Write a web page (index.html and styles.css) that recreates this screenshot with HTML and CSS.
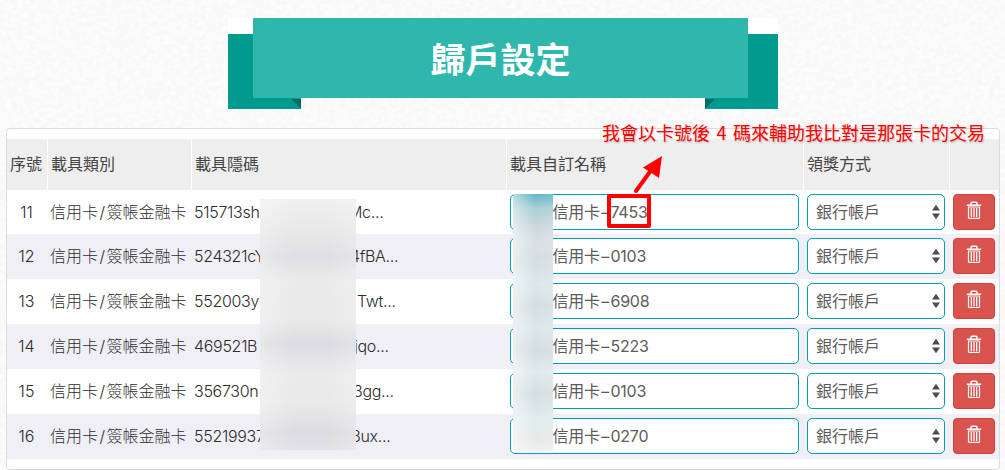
FILE: index.html
```
<!DOCTYPE html>
<html lang="zh-Hant">
<head>
<meta charset="utf-8">
<title>歸戶設定</title>
<link rel="stylesheet" href="styles.css">
</head>
<body>
<svg class="paper" width="1005" height="470" aria-hidden="true">
  <filter id="grain" x="0" y="0" width="100%" height="100%" color-interpolation-filters="sRGB">
    <feTurbulence type="fractalNoise" baseFrequency="0.17 0.22" numOctaves="3" seed="4"/>
    <feColorMatrix values="0.045 0 0 0 0.957  0.045 0 0 0 0.957  0.045 0 0 0 0.957  0 0 0 0 1"/>
  </filter>
  <rect width="1005" height="470" filter="url(#grain)"/>
</svg>
<svg width="0" height="0" class="defs" aria-hidden="true">
  <symbol id="trash" viewBox="0 0 16 19">
    <path d="M.8 4.200h14.400M5 4V2.200Q5 1.300 6 1.300h4Q11 1.300 11 2.200V4" fill="none" stroke="#fff" stroke-width="1.5"/>
    <path d="M2.500 6v10.500q0 1 1 1h9q1 0 1-1V6z" fill="none" stroke="#fff" stroke-width="1.2"/>
    <path d="M5.300 7v9.500M8 7v9.500M10.700 7v9.500" stroke="#fff" stroke-width="1.25"/>
  </symbol>
  <symbol id="sort" viewBox="0 0 8 16">
    <path d="M0 6.500L4 .8l4 5.700zM0 9.500l4 5.700 4-5.700z" fill="#4c4c4c"/>
  </symbol>
</svg>

<header class="ribbon">
  <span class="tail tail-left"></span>
  <span class="tail tail-right"></span>
  <h1 class="title">歸戶設定</h1>
</header>

<main class="panel">
  <div class="row head">
    <div>序號</div><div>載具類別</div><div>載具隱碼</div><div>載具自訂名稱</div><div>領獎方式</div><div></div>
  </div>
  <div class="row r11">
    <div class="num">11</div><div class="kind">信用卡<i>/</i>簽帳金融卡</div>
    <div class="code"><span class="start">515713sh</span><span>Mc...</span></div>
    <div class="name"><div class="field">信用卡<i>–</i>7453</div></div>
    <div class="pay"><div class="select">銀行帳戶<svg><use href="#sort"/></svg></div></div>
    <div class="act"><button class="delete"><svg><use href="#trash"/></svg></button></div>
  </div>
  <div class="row r12">
    <div class="num">12</div><div class="kind">信用卡<i>/</i>簽帳金融卡</div>
    <div class="code"><span class="start">524321cY</span><span>4fBA...</span></div>
    <div class="name"><div class="field">信用卡<i>–</i>0103</div></div>
    <div class="pay"><div class="select">銀行帳戶<svg><use href="#sort"/></svg></div></div>
    <div class="act"><button class="delete"><svg><use href="#trash"/></svg></button></div>
  </div>
  <div class="row r13">
    <div class="num">13</div><div class="kind">信用卡<i>/</i>簽帳金融卡</div>
    <div class="code"><span class="start">552003y</span><span>Twt...</span></div>
    <div class="name"><div class="field">信用卡<i>–</i>6908</div></div>
    <div class="pay"><div class="select">銀行帳戶<svg><use href="#sort"/></svg></div></div>
    <div class="act"><button class="delete"><svg><use href="#trash"/></svg></button></div>
  </div>
  <div class="row r14">
    <div class="num">14</div><div class="kind">信用卡<i>/</i>簽帳金融卡</div>
    <div class="code"><span class="start">469521B</span><span>jqo...</span></div>
    <div class="name"><div class="field">信用卡<i>–</i>5223</div></div>
    <div class="pay"><div class="select">銀行帳戶<svg><use href="#sort"/></svg></div></div>
    <div class="act"><button class="delete"><svg><use href="#trash"/></svg></button></div>
  </div>
  <div class="row r15">
    <div class="num">15</div><div class="kind">信用卡<i>/</i>簽帳金融卡</div>
    <div class="code"><span class="start">356730n</span><span>3gg...</span></div>
    <div class="name"><div class="field">信用卡<i>–</i>0103</div></div>
    <div class="pay"><div class="select">銀行帳戶<svg><use href="#sort"/></svg></div></div>
    <div class="act"><button class="delete"><svg><use href="#trash"/></svg></button></div>
  </div>
  <div class="row r16">
    <div class="num">16</div><div class="kind">信用卡<i>/</i>簽帳金融卡</div>
    <div class="code"><span class="start">55219937</span><span>8ux...</span></div>
    <div class="name"><div class="field">信用卡<i>–</i>0270</div></div>
    <div class="pay"><div class="select">銀行帳戶<svg><use href="#sort"/></svg></div></div>
    <div class="act"><button class="delete"><svg><use href="#trash"/></svg></button></div>
  </div>
</main>

<div class="mask mask-code"></div>
<div class="mask mask-name"></div>
<div class="highlight"></div>
<svg class="arrow" width="40" height="50" viewBox="0 0 40 50">
  <path d="M6 41L22 19" stroke="#f00" stroke-width="4" stroke-linecap="round"/>
  <path d="M32 6L13 17.500 29 28z" fill="#f00"/>
</svg>
<div class="note">我會以卡號後 4 碼來輔助我比對是那張卡的交易</div>
</body>
</html>
```

FILE: styles.css
```
* { box-sizing: border-box; }
body {
  margin: 0;
  width: 1005px;
  height: 470px;
  overflow: hidden;
  position: relative;
  background: #fafafa;
  color: #2c2c2c;
  font: 300 16px/24px Inter, "Noto Sans CJK TC", sans-serif;
}
.paper { position: absolute; left: 0; top: 0; z-index: -2; }
.defs { position: absolute; }

.ribbon {
  position: relative;
  width: 550px;
  height: 110px;
  margin-left: 228px;
  padding: 18px 30px 0 25px;
}
.title {
  position: relative;
  margin: 0;
  height: 80px;
  background: #2fb6ad;
  color: #fff;
  font: 700 35px/80px "Noto Sans CJK TC", sans-serif;
  text-align: center;
}
.tail {
  position: absolute;
  top: 18px;
  width: 73px;
  height: 91px;
  border-top: 16px solid #fff;
  background: #009a8f;
}
.tail-left { left: 0; }
.tail-right { right: 0; }
.tail::after {
  content: "";
  position: absolute;
  bottom: 0;
  width: 10px;
  height: 10px;
  background: #006a61;
}
.tail-left::after { right: 0; clip-path: polygon(0 0, 100% 0, 100% 100%); }
.tail-right::after { left: 0; clip-path: polygon(0 0, 100% 0, 0 100%); }

.panel {
  margin: 18px 5px 0 6px;
  height: 342px;
  padding-top: 10px;
  border: 1px solid #dcdcdc;
  border-radius: 4px;
  background: #fff;
}
.row {
  display: grid;
  grid-template-columns: 41px 144px 315px 297px 146px 49px;
  height: 45px;
}
.row > div { white-space: nowrap; }
.r11 { height: 44px; }
.r12, .r14, .r16 { background: #f0eff6; }
.head { height: 51px; border-bottom: 1px solid #f6f6f6; font-weight: 400; color: #444; }
.head > div {
  padding: 0 0 0 3px;
  line-height: 51px;
  background: #eee;
  border-right: 1px solid #fff;
}
.head > div:last-child { border-right: 0; }
.num { padding: 10px 2px 0 0; text-align: center; }
.kind { padding: 10px 0 0 2px; }
.kind i { display: inline-block; width: 8.5px; font-style: normal; text-align: center; }
.code { display: flex; padding: 10px 0 0 2px; letter-spacing: -0.3px; }
.start { flex: none; width: 154px; }
.r12 .start { width: 156px; }
.r13 .start { width: 163px; }
.r14 .start { width: 160px; }
.r15 .start { width: 159px; }
.r16 .start { width: 157px; }
.name { padding: 4px 5px 0 3px; }
.pay { padding: 4px 5px 0 3px; }
.act { padding: 4px 4px 0 3px; }
.field, .select {
  height: 36px;
  border: 1px solid #00a0b2;
  border-radius: 5px;
  background: #fff;
  color: #5c5c5c;
  font-weight: 400;
  line-height: 35px;
}
.field { padding-left: 41.5px; letter-spacing: -0.2px; }
.field i { display: inline-block; width: 10.5px; font-style: normal; text-align: center; }
.select { display: flex; align-items: center; justify-content: space-between; padding: 0 4px 0 8px; }
.select svg { width: 8px; height: 16px; }
.delete {
  display: flex;
  width: 42px;
  height: 36px;
  padding: 6px 0 0 12px;
  border: 1px solid #d43f3a;
  border-radius: 4px;
  background: #d9534f;
}
.delete svg { width: 16px; height: 19px; }

/* Privacy blurs over the sensitive characters */
.mask { position: absolute; }
.mask-code {
  left: 260px;
  top: 199px;
  width: 96px;
  height: 251px;
  background:
    linear-gradient(90deg, rgba(255,255,255,.3), transparent 35%, transparent 70%, rgba(255,255,255,.2)),
    linear-gradient(#f0f0f0 0, #e9e9ea 27px, #dfdfe4 59px, #ebebec 82px, #e9e9ea 120px, #dcdce1 145px, #ebebec 174px, #e9e9e9 205px, #dddde1 233px, #e2e2e6 251px);
}
.mask-name {
  left: 513px;
  top: 194px;
  width: 40px;
  height: 257px;
  background:
    linear-gradient(90deg, rgba(255,255,255,.5), transparent 55%, rgba(255,255,255,.1)),
    linear-gradient(#5fb7c5 0, #a8ced6 14px, #cbd7dc 32px, #d9e1e5 48px, #d4dde1 65px, #dce8eb 90px, #d6dee2 112px, #dbe7ea 135px, #d5dcdf 156px, #deebee 178px, #d6dee1 200px, #e0ecee 225px, #e6e8e8 244px, #efefef 257px);
}
.highlight {
  position: absolute;
  left: 607px;
  top: 194px;
  width: 44px;
  height: 34px;
  border: 4px solid #f00;
  border-radius: 2px;
}
.arrow { position: absolute; left: 630px; top: 150px; }
.note {
  position: absolute;
  left: 602px;
  top: 119px;
  color: #f00;
  font: 400 18px/26px "Noto Sans CJK TC", sans-serif;
  word-spacing: 2.5px;
  white-space: nowrap;
  text-shadow: 1px 1px 2px rgba(0,0,0,.25);
}
```
